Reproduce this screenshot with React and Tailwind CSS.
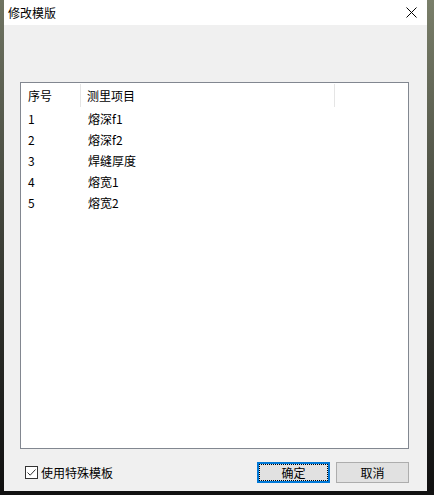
import React, { useState } from "react";

const rows = [
  { no: "1", name: "熔深f1" },
  { no: "2", name: "熔深f2" },
  { no: "3", name: "焊缝厚度" },
  { no: "4", name: "熔宽1" },
  { no: "5", name: "熔宽2" },
];

const font = { fontFamily: '"Noto Sans CJK SC", "Liberation Sans", sans-serif' };

export default function App() {
  const [special, setSpecial] = useState(true);

  return (
    <div className="w-[434px] h-[497px] bg-[#121212] flex flex-col" style={font}>
      <div className="flex flex-1">
        {/* left strip of desktop behind the dialog */}
        <div className="w-[4px] bg-gradient-to-b from-[#6f7462] to-[#101010]" />

        <div className="w-[423px] flex flex-col">
          {/* title bar */}
          <div className="h-[25px] bg-white flex items-center justify-between pl-[4px] pr-[10px]">
            <span className="text-[12px] text-black leading-none">修改模版</span>
            <svg width="11" height="11" viewBox="0 0 11 11">
              <path d="M0.5 0.5 L10.5 10.5 M10.5 0.5 L0.5 10.5" stroke="#000" strokeWidth="1" />
            </svg>
          </div>

          {/* body */}
          <div className="flex-1 bg-[#f0f0f0] flex flex-col pl-[16px] pr-[18px] pt-[57px]">
            <div className="h-[367px] border border-[#828790] bg-white flex flex-col">
              {/* header */}
              <div className="h-[25px] flex items-center text-[12px] text-black">
                <div className="w-[60px] h-[23px] flex items-center pl-[7px] border-r border-[#e5e5e5]">
                  序号
                </div>
                <div className="w-[254px] h-[23px] flex items-center pl-[6px] border-r border-[#e5e5e5]">
                  测里项目
                </div>
              </div>
              {/* rows */}
              {rows.map((r) => (
                <div key={r.no} className="h-[21px] flex items-center text-[12px] text-black">
                  <div className="w-[60px] pl-[7px]">{r.no}</div>
                  <div className="pl-[7px]">{r.name}</div>
                </div>
              ))}
            </div>

            {/* bottom row */}
            <div className="mt-[13px] flex items-center">
              <label
                className="flex items-center gap-[3px] ml-[5px] text-[12px] text-black cursor-pointer"
                onClick={() => setSpecial(!special)}
              >
                <span className="w-[13px] h-[13px] border border-[#333] bg-white flex items-center justify-center">
                  {special && (
                    <svg width="11" height="11" viewBox="0 0 11 11">
                      <path d="M1.5 5.5 L4.2 8.2 L9.5 2.5" fill="none" stroke="#333" strokeWidth="1" />
                    </svg>
                  )}
                </span>
                使用特殊模板
              </label>
              <div className="ml-auto flex gap-[6px]">
                <button className="w-[73px] h-[21px] bg-[#e1e1e1] border-2 border-[#0078d7] outline-1 outline-dotted outline-black outline-offset-[-3px] text-[12px] text-black flex items-center justify-center">
                  确定
                </button>
                <button className="w-[73px] h-[21px] bg-[#e1e1e1] border border-[#adadad] text-[12px] text-black flex items-center justify-center">
                  取消
                </button>
              </div>
            </div>
          </div>
        </div>

        {/* right strip */}
        <div className="w-[7px] bg-gradient-to-b from-[#7a7f6a] to-[#101010]" />
      </div>
      <div className="h-[4px] bg-[#121212]" />
      <div className="h-[2px] bg-white" />
    </div>
  );
}
